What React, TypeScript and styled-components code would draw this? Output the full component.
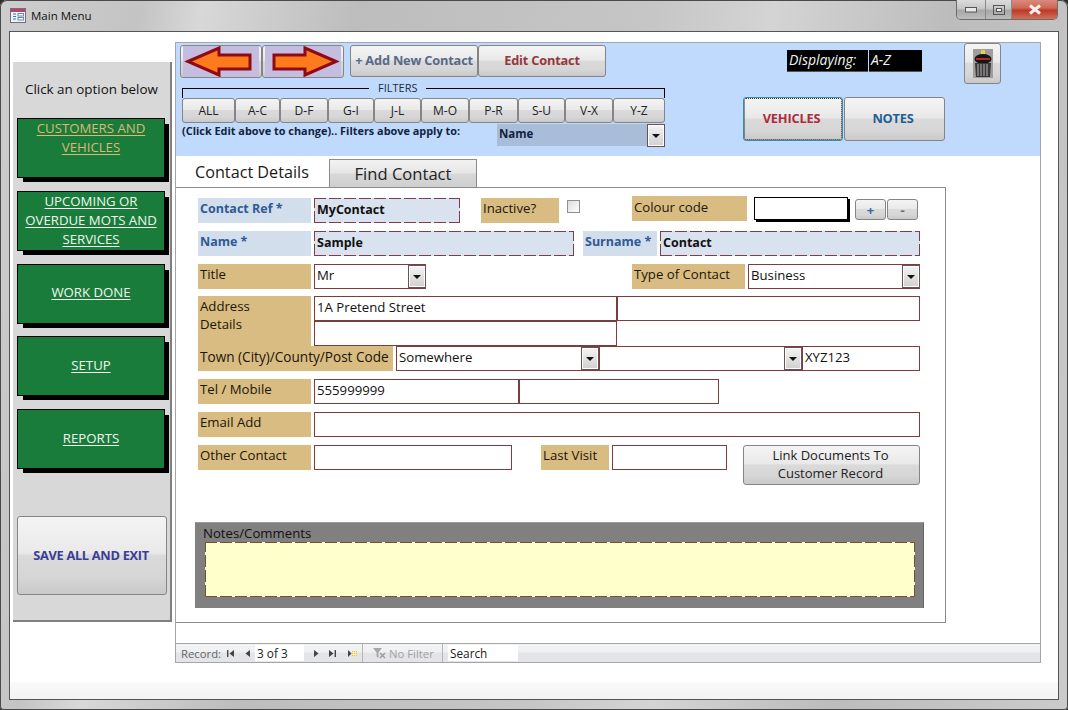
import React from "react";
import styled, { createGlobalStyle, css } from "styled-components";

const Global = createGlobalStyle`
  html, body { margin: 0; padding: 0; background: #2c2c2c; }
  * { box-sizing: border-box; }
  body { font-family: "Open Sans", "Noto Sans", sans-serif; color: #111; }
`;

const gloss = css`
  background: linear-gradient(#f4f4f4 0%, #e9e9e9 47%, #dadada 50%, #d6d6d6 78%, #c9c9c9 100%);
  border: 1px solid #858585;
  border-radius: 3px;
`;

const dashFrame = (c: string) => css`
  background-image:
    repeating-linear-gradient(90deg, ${c} 0 12px, transparent 12px 15px),
    repeating-linear-gradient(90deg, ${c} 0 12px, transparent 12px 15px),
    repeating-linear-gradient(0deg, ${c} 0 12px, transparent 12px 15px),
    repeating-linear-gradient(0deg, ${c} 0 12px, transparent 12px 15px);
  background-size: 100% 1px, 100% 1px, 1px 100%, 1px 100%;
  background-position: top, bottom, left, right;
  background-repeat: no-repeat;
`;

const Window = styled.div`
  width: 1068px;
  height: 710px;
  padding: 0 9px 10px;
  display: flex;
  flex-direction: column;
  overflow: hidden;
  border-radius: 7px 7px 4px 4px;
  box-shadow: inset 0 0 0 1px #4a4a4a;
  background: linear-gradient(100deg, #cdcdcd 0%, #c4c4c4 12%, #d8d8d8 17%, #bdbdbd 30%, #c6c6c6 55%, #d4d4d4 65%, #bcbcbc 80%, #cbcbcb 100%);
`;
const TitleBar = styled.div`
  height: 31px;
  flex: none;
  display: flex;
  align-items: flex-start;
`;
const TitleIcon = styled.svg`
  width: 16px;
  height: 15px;
  margin: 8px 0 0 1px;
`;
const TitleText = styled.span`
  margin: 8px 0 0 5px;
  font-size: 11.5px;
  line-height: 16px;
  color: #111;
`;
const Controls = styled.div`
  margin: 0 1px 0 auto;
  height: 20px;
  display: flex;
  border: 1px solid #6b6b6b;
  border-top: 0;
  border-radius: 0 0 5px 5px;
  overflow: hidden;
`;
const Control = styled.div<{ $w: number; $red?: boolean }>`
  width: ${(p) => p.$w}px;
  display: flex;
  align-items: center;
  justify-content: center;
  border-left: 1px solid #8a8a8a;
  background: ${(p) =>
    p.$red
      ? "linear-gradient(#d98a7c 0%, #cf6a58 40%, #bd3a26 55%, #d2705c 100%)"
      : "linear-gradient(#dcdcdc 0%, #c6c6c6 45%, #a8a8a8 55%, #bcbcbc 100%)"};
  &:first-child { border-left: 0; }
`;
const Client = styled.div`
  flex: 1;
  display: flex;
  flex-direction: column;
  background: #fff;
  border: 1px solid #555;
  min-height: 0;
`;
const Body = styled.div`
  flex: 1;
  display: flex;
  align-items: flex-start;
  padding-left: 3px;
`;
const BottomStrip = styled.div`
  flex: none;
  height: 17px;
  background: linear-gradient(#fafafa, #f3f3f3);
`;

const Sidebar = styled.div`
  width: 159px;
  height: 560px;
  margin-top: 30px;
  padding: 0 0 0 4px;
  background: #d8d8d8;
  border-right: 2px solid #7f7f7f;
  border-bottom: 2px solid #7f7f7f;
  display: flex;
  flex-direction: column;
`;
const SideTitle = styled.div`
  height: 56px;
  padding: 17px 0 0 8px;
  font-size: 13.4px;
  line-height: 20px;
  white-space: nowrap;
  color: #111;
`;
const SideList = styled.div`
  display: flex;
  flex-direction: column;
  gap: 12.75px;
`;
const SideButton = styled.div<{ $tan?: boolean; $top?: boolean }>`
  width: 148px;
  height: 60px;
  padding-bottom: ${(p) => (p.$top ? 0 : 2)}px;
  background: #1a7c3b;
  border: 1px solid #000;
  box-shadow: 5px 5px 0 -1px #000;
  display: flex;
  align-items: ${(p) => (p.$top ? "flex-start" : "center")};
  justify-content: center;
  text-align: center;
  font-size: 13.2px;
  line-height: 19px;
  white-space: nowrap;
  text-decoration: underline;
  text-underline-offset: 2px;
  color: ${(p) => (p.$tan ? "#dcb877" : "#f2f7f0")};
`;
const SaveButton = styled.div`
  ${gloss}
  width: 150px;
  height: 79px;
  margin-top: 47px;
  padding: 0 2px 2px 0;
  display: flex;
  align-items: center;
  justify-content: center;
  font-size: 12.8px;
  font-weight: 700;
  letter-spacing: -0.3px;
  color: #3a3d98;
`;

const Main = styled.div`
  width: 866px;
  height: 621px;
  margin: 10px 0 0 3px;
  border: 1px solid #a6a6a6;
  border-bottom: 0;
  display: flex;
  flex-direction: column;
`;
const Header = styled.div`
  flex: none;
  height: 113px;
  background: #bfdafc;
  display: flex;
`;
const HeadLeft = styled.div`
  width: 494px;
  padding: 2px 0 0 4px;
`;
const TopButtons = styled.div`
  display: flex;
  align-items: flex-start;
`;
const NavButton = styled.div`
  ${gloss}
  width: 82px;
  height: 33px;
  display: flex;
  align-items: center;
  justify-content: center;
  padding: 0 2px;
`;
const ActionButton = styled.div<{ $color: string; $ml?: number }>`
  ${gloss}
  width: 128px;
  height: 32px;
  margin-left: ${(p) => p.$ml || 0}px;
  padding-bottom: 2px;
  display: flex;
  align-items: center;
  justify-content: center;
  font-size: 12.8px;
  font-weight: 700;
  letter-spacing: -0.2px;
  white-space: nowrap;
  color: ${(p) => p.$color};
`;
const FilterFrame = styled.div`
  width: 483px;
  height: 10px;
  margin: 10px 0 0 2px;
  display: flex;
  border: 1px solid #000;
  border-bottom: 0;
  border-top: 0;
`;
const FilterLine = styled.div<{ $w?: number }>`
  height: 1px;
  background: #000;
  flex: ${(p) => (p.$w ? `0 0 ${p.$w}px` : "1")};
`;
const FilterLegend = styled.div`
  padding: 0 9px;
  margin-top: -7px;
  font-size: 11px;
  line-height: 14px;
  color: #1c2b44;
`;
const FilterRow = styled.div`
  display: flex;
  margin-left: 2px;
`;
const FilterButton = styled.div<{ $w: number }>`
  ${gloss}
  width: ${(p) => p.$w}px;
  height: 25px;
  padding-bottom: 1px;
  display: flex;
  align-items: center;
  justify-content: center;
  font-size: 12px;
  color: #222;
`;
const CaptionRow = styled.div`
  display: flex;
  align-items: flex-start;
  margin: 1px 0 0 2px;
`;
const Caption = styled.div`
  width: 315px;
  font-size: 10.9px;
  font-weight: 700;
  line-height: 14px;
  color: #12233d;
`;
const ScopeSelect = styled.div`
  width: 168px;
  height: 22px;
  background: #a9bdd9;
  display: flex;
  align-items: center;
  justify-content: space-between;
  padding: 0 1px 0 2px;
  font-size: 11.5px;
  font-weight: 700;
  color: #12233d;
`;
const ScopeText = styled.span`
  margin-top: -4px;
`;
const HeadRight = styled.div`
  flex: 1;
`;
const RightTop = styled.div`
  height: 54px;
  padding-left: 117px;
  display: flex;
  align-items: flex-start;
`;
const DisplayLabel = styled.div<{ $w: number; $ml?: number }>`
  width: ${(p) => p.$w}px;
  height: 22px;
  margin: 7px 0 0 ${(p) => p.$ml || 0}px;
  padding-left: 2px;
  background: #000;
  color: #f2f2f2;
  font-size: 14px;
  font-style: italic;
  line-height: 19px;
  white-space: nowrap;
  border-bottom: 1px solid #555;
`;
const TrashButton = styled.div`
  ${gloss}
  width: 37px;
  height: 41px;
  margin-left: 42px;
  display: flex;
  align-items: center;
  justify-content: center;
`;
const RightButtons = styled.div`
  display: flex;
  gap: 1px;
  padding-left: 73px;
`;
const BigButton = styled.div<{ $color: string; $w: number; $focus?: boolean }>`
  ${gloss}
  width: ${(p) => p.$w}px;
  height: 44px;
  padding: 0 3px 2px 0;
  display: flex;
  align-items: center;
  justify-content: center;
  font-size: 12.8px;
  font-weight: 700;
  letter-spacing: -0.2px;
  color: ${(p) => p.$color};
  ${(p) =>
    p.$focus &&
    css`
      border-color: #3f8aa8;
      outline: 1px dotted #333;
      outline-offset: -2px;
    `}
`;

const TabStrip = styled.div`
  flex: none;
  height: 31px;
  padding-left: 19px;
  display: flex;
  align-items: flex-end;
`;
const ActiveTab = styled.div`
  width: 134px;
  height: 31px;
  padding-top: 4px;
  font-size: 16.2px;
  line-height: 24px;
  white-space: nowrap;
  color: #1a1a1a;
`;
const Tab = styled.div`
  width: 148px;
  height: 28px;
  display: flex;
  align-items: center;
  justify-content: center;
  font-size: 16.6px;
  color: #222;
  border: 1px solid #8c8c8c;
  border-bottom: 0;
  background: linear-gradient(#f2f2f2 0%, #e6e6e6 48%, #d8d8d8 52%, #cfcfcf 100%);
`;
const Panel = styled.div`
  width: 770px;
  height: 436px;
  padding: 10px 0 0 22px;
  border-top: 1px solid #8c8c8c;
  border-right: 1px solid #8c8c8c;
  border-bottom: 1px solid #8c8c8c;
`;
const Row = styled.div<{ $mb?: number; $h?: number }>`
  display: flex;
  align-items: flex-start;
  height: ${(p) => p.$h ?? 25}px;
  margin-bottom: ${(p) => p.$mb ?? 8}px;
`;
const Label = styled.div<{ $w?: number; $ml?: number; $mt?: number; $blue?: boolean; $h?: number; $fs?: number; $pt?: number }>`
  flex: none;
  width: ${(p) => p.$w ?? 113}px;
  height: ${(p) => p.$h ?? 25}px;
  margin: ${(p) => p.$mt ?? 0}px 0 0 ${(p) => p.$ml ?? 0}px;
  padding: ${(p) => p.$pt ?? (p.$blue ? 2 : 1)}px 2px 0;
  font-size: ${(p) => p.$fs ?? (p.$blue ? 12.5 : 13.2)}px;
  line-height: 18px;
  white-space: nowrap;
  background: ${(p) => (p.$blue ? "#d3deec" : "#d9bc82")};
  color: ${(p) => (p.$blue ? "#2d5a96" : "#1c1608")};
  font-weight: ${(p) => (p.$blue ? 700 : 400)};
`;
const Field = styled.div<{ $w: number; $ml?: number }>`
  flex: none;
  width: ${(p) => p.$w}px;
  height: 25px;
  margin-left: ${(p) => p.$ml ?? 0}px;
  padding-left: 2px;
  border: 1px solid #7d3d3d;
  background: #fff;
  font-size: 13.2px;
  line-height: 21px;
  white-space: nowrap;
  color: #111;
`;
const DashField = styled.div<{ $w: number; $ml?: number }>`
  flex: none;
  width: ${(p) => p.$w}px;
  height: 25px;
  margin-left: ${(p) => p.$ml ?? 0}px;
  padding-left: 3px;
  background-color: #d9e2ef;
  ${dashFrame("#7d3d4d")}
  font-size: 12.5px;
  font-weight: 700;
  line-height: 23px;
  color: #111;
`;
const SelectBox = styled(Field)`
  display: flex;
  justify-content: space-between;
`;
const Arrow = styled.div`
  width: 16px;
  height: 21px;
  margin: 1px 0 0 auto;
  flex: none;
  position: relative;
  border: 1px solid #fff;
  box-shadow: 0 0 0 1px #6f5050;
  background: linear-gradient(#f2f2f2, #d2d2d2);
  &::after {
    content: "";
    position: absolute;
    left: 3px;
    top: 8px;
    border: 4px solid transparent;
    border-top: 4px solid #111;
    border-bottom: 0;
  }
`;
const Check = styled.div`
  flex: none;
  width: 13px;
  height: 13px;
  margin: 2px 0 0 8px;
  border: 1px solid #8f8f8f;
  background: linear-gradient(135deg, #dcdcdc, #fff);
`;
const ColourBox = styled.div`
  flex: none;
  width: 94px;
  height: 23px;
  margin: -1px 0 0 7px;
  background: #fff;
  border: 1px solid #000;
  box-shadow: 2px 2px 0 #000;
`;
const MiniButton = styled.div<{ $ml: number; $color: string }>`
  ${gloss}
  flex: none;
  width: 31px;
  height: 21px;
  margin: 1px 0 0 ${(p) => p.$ml}px;
  text-align: center;
  font-size: 13px;
  line-height: 21px;
  font-weight: 700;
  color: ${(p) => p.$color};
`;
const AddressLines = styled.div`
  margin-left: 3px;
  display: flex;
  flex-direction: column;
`;
const AddressLine = styled.div`
  display: flex;
`;
const LinkButton = styled.div`
  ${gloss}
  flex: none;
  width: 177px;
  height: 40px;
  margin-left: 16px;
  padding-right: 2px;
  text-align: center;
  font-size: 13px;
  line-height: 18px;
  color: #222;
`;
const Notes = styled.div`
  width: 729px;
  height: 86px;
  margin: 52px 0 0 -3px;
  padding: 0 8px 0 10px;
  background: #808080;
  border-top: 1px solid #9a9a9a;
  border-right: 1px solid #666;
`;
const NotesLabel = styled.div`
  height: 19px;
  margin-left: -2px;
  padding-top: 1px;
  font-size: 13.2px;
  line-height: 18px;
  color: #111;
`;
const NotesBox = styled.div`
  height: 55px;
  background-color: #ffffcc;
  outline: 1px solid #fff;
  outline-offset: -1px;
  position: relative;
  &::after {
    content: "";
    position: absolute;
    inset: 0;
    ${dashFrame("#7a5030")}
  }
`;

const StatusBar = styled.div`
  flex: none;
  margin-top: auto;
  height: 20px;
  display: flex;
  align-items: center;
  border-top: 1px solid #a6a6a6;
  border-bottom: 1px solid #a6a6a6;
  background: linear-gradient(#f3f4f6 0%, #eff0f2 45%, #e3e4e7 50%, #e4e5e8 100%);
  font-size: 11.3px;
  color: #6a6a6a;
`;
const StatusText = styled.span<{ $w: number; $pl: number; $faint?: boolean }>`
  flex: none;
  width: ${(p) => p.$w}px;
  padding-left: ${(p) => p.$pl}px;
  white-space: nowrap;
  color: ${(p) => (p.$faint ? "#a2a2a2" : "#666")};
`;
const StatusIcon = styled.svg<{ $ml: number }>`
  flex: none;
  width: 9px;
  height: 9px;
  margin-left: ${(p) => p.$ml}px;
`;
const StatusBox = styled.div<{ $w: number; $ml: number }>`
  flex: none;
  width: ${(p) => p.$w}px;
  height: 16px;
  margin-left: ${(p) => p.$ml}px;
  padding-left: 2px;
  background: #fff;
  color: #222;
  font-size: 11.8px;
  line-height: 16px;
`;
const StatusDivider = styled.div<{ $ml: number }>`
  flex: none;
  width: 1px;
  height: 18px;
  margin-left: ${(p) => p.$ml}px;
  background: #b5b5b5;
`;
const FilterIcon = styled.svg`
  flex: none;
  width: 14px;
  height: 14px;
  margin-left: 9px;
`;

const filters: [string, number][] = [
  ["ALL", 53], ["A-C", 45], ["D-F", 48], ["G-I", 46], ["J-L", 47],
  ["M-O", 48], ["P-R", 49], ["S-U", 47], ["V-X", 48], ["Y-Z", 52],
];

const LeftArrow = () => (
  <svg width="76" height="31" viewBox="0 0 76 31">
    <rect width="76" height="31" fill="#c5bde0" />
    <path d="M5 15.5 L36 2 V9 H67 V23 H36 V29 Z" fill="#ff7a1c" stroke="#8e0a14" strokeWidth="3" />
  </svg>
);
const RightArrow = () => (
  <svg width="76" height="31" viewBox="0 0 76 31">
    <rect width="76" height="31" fill="#c5bde0" />
    <path d="M71 15.5 L40 2 V9 H9 V23 H40 V29 Z" fill="#ff7a1c" stroke="#8e0a14" strokeWidth="3" />
  </svg>
);
const TrashIcon = () => (
  <svg width="20" height="29" viewBox="0 0 20 29">
    <rect width="20" height="29" fill="#a39c9c" />
    <path d="M8 1h4v5H8z" fill="#d8d84a" />
    <ellipse cx="10" cy="10" rx="8.5" ry="5" fill="#161616" />
    <path d="M3 9h14v2H3z" fill="#b3262a" />
    <path d="M2 14h16l-1 14H3z" fill="#3a3a3a" />
    <path d="M5 15v12M8 15v12M11 15v12M14 15v12" stroke="#b5b5b5" strokeWidth="1" />
  </svg>
);

const App = () => (
  <Window>
    <Global />
    <TitleBar>
      <TitleIcon viewBox="0 0 16 15">
        <rect x="0.5" y="0.5" width="15" height="14" fill="#eef3fa" stroke="#7a6a80" />
        <rect x="1" y="1" width="14" height="3" fill="#b0486a" />
        <path d="M3 6h3M3 8.5h3M3 11h3" stroke="#4a6ea8" />
        <rect x="8" y="5.5" width="5.5" height="2.5" fill="#fff" stroke="#4a6ea8" strokeWidth="0.8" />
        <rect x="8" y="9.5" width="5.5" height="2.5" fill="#fff" stroke="#4a6ea8" strokeWidth="0.8" />
      </TitleIcon>
      <TitleText>Main Menu</TitleText>
      <Controls>
        <Control $w={28}>
          <svg width="12" height="6" viewBox="0 0 12 6"><rect x="0.5" y="0.5" width="11" height="4.5" fill="#e8e8e8" stroke="#555" /></svg>
        </Control>
        <Control $w={26}>
          <svg width="12" height="10" viewBox="0 0 12 10"><rect x="0.5" y="0.5" width="11" height="9" fill="none" stroke="#555" /><rect x="3.5" y="3.5" width="5" height="3" fill="#eee" stroke="#555" /></svg>
        </Control>
        <Control $w={46} $red>
          <svg width="14" height="11" viewBox="0 0 14 11"><path d="M2 1.5 L12 9.5 M12 1.5 L2 9.5" stroke="#f4f0ee" strokeWidth="3" /></svg>
        </Control>
      </Controls>
    </TitleBar>
    <Client>
      <Body>
        <Sidebar>
          <SideTitle>Click an option below</SideTitle>
          <SideList>
            <SideButton $tan $top>CUSTOMERS AND<br />VEHICLES</SideButton>
            <SideButton $top>UPCOMING OR<br />OVERDUE MOTS AND<br />SERVICES</SideButton>
            <SideButton>WORK DONE</SideButton>
            <SideButton>SETUP</SideButton>
            <SideButton>REPORTS</SideButton>
          </SideList>
          <SaveButton>SAVE ALL AND EXIT</SaveButton>
        </Sidebar>
        <Main>
          <Header>
            <HeadLeft>
              <TopButtons>
                <NavButton><LeftArrow /></NavButton>
                <NavButton><RightArrow /></NavButton>
                <ActionButton $ml={6} $color="#566a88">+ Add New Contact</ActionButton>
                <ActionButton $color="#95383c">Edit Contact</ActionButton>
              </TopButtons>
              <FilterFrame>
                <FilterLine $w={186} />
                <FilterLegend>FILTERS</FilterLegend>
                <FilterLine />
              </FilterFrame>
              <FilterRow>
                {filters.map(([t, w]) => (
                  <FilterButton key={t} $w={w}>{t}</FilterButton>
                ))}
              </FilterRow>
              <CaptionRow>
                <Caption>(Click Edit above to change).. Filters above apply to:</Caption>
                <ScopeSelect><ScopeText>Name</ScopeText><Arrow /></ScopeSelect>
              </CaptionRow>
            </HeadLeft>
            <HeadRight>
              <RightTop>
                <DisplayLabel $w={81}>Displaying:</DisplayLabel>
                <DisplayLabel $w={53} $ml={1}>A-Z</DisplayLabel>
                <TrashButton><TrashIcon /></TrashButton>
              </RightTop>
              <RightButtons>
                <BigButton $w={100} $color="#b02a3c" $focus>VEHICLES</BigButton>
                <BigButton $w={101} $color="#1f5f96">NOTES</BigButton>
              </RightButtons>
            </HeadRight>
          </Header>
          <TabStrip>
            <ActiveTab>Contact Details</ActiveTab>
            <Tab>Find Contact</Tab>
          </TabStrip>
          <Panel>
            <Row>
              <Label $blue>Contact Ref *</Label>
              <DashField $w={146} $ml={3}>MyContact</DashField>
              <Label $w={78} $ml={21}>Inactive?</Label>
              <Check />
              <Label $w={115} $ml={52} $mt={-2} $pt={2}>Colour code</Label>
              <ColourBox />
              <MiniButton $ml={7} $color="#2a6aa8">+</MiniButton>
              <MiniButton $ml={1} $color="#666">-</MiniButton>
            </Row>
            <Row>
              <Label $blue>Name *</Label>
              <DashField $w={260} $ml={3}>Sample</DashField>
              <Label $blue $w={74} $ml={9}>Surname *</Label>
              <DashField $w={260} $ml={3}>Contact</DashField>
            </Row>
            <Row $mb={7}>
              <Label>Title</Label>
              <SelectBox $w={112} $ml={3}>Mr<Arrow /></SelectBox>
              <Label $w={113} $ml={206}>Type of Contact</Label>
              <SelectBox $w={172} $ml={3}>Business<Arrow /></SelectBox>
            </Row>
            <Row $h={50} $mb={0}>
              <Label $h={50}>Address<br />Details</Label>
              <AddressLines>
                <AddressLine>
                  <Field $w={303}>1A Pretend Street</Field>
                  <Field $w={303}></Field>
                </AddressLine>
                <AddressLine>
                  <Field $w={303}></Field>
                </AddressLine>
              </AddressLines>
            </Row>
            <Row>
              <Label $w={195} $fs={13.6} $pt={2}>Town (City)/County/Post Code</Label>
              <SelectBox $w={203} $ml={3}>Somewhere<Arrow /></SelectBox>
              <SelectBox $w={203}><Arrow /></SelectBox>
              <Field $w={118}>XYZ123</Field>
            </Row>
            <Row>
              <Label>Tel / Mobile</Label>
              <Field $w={205} $ml={3}>555999999</Field>
              <Field $w={200}></Field>
            </Row>
            <Row>
              <Label>Email Add</Label>
              <Field $w={606} $ml={3}></Field>
            </Row>
            <Row>
              <Label>Other Contact</Label>
              <Field $w={198} $ml={3}></Field>
              <Label $w={68} $ml={29}>Last Visit</Label>
              <Field $w={115} $ml={3}></Field>
              <LinkButton>Link Documents To<br />Customer Record</LinkButton>
            </Row>
            <Notes>
              <NotesLabel>Notes/Comments</NotesLabel>
              <NotesBox />
            </Notes>
          </Panel>
          <StatusBar>
            <StatusText $w={50} $pl={5}>Record:</StatusText>
            <StatusIcon $ml={0} viewBox="0 0 9 9"><path d="M1 1h1.4v7H1zM8 1v7L3.5 4.5z" fill="#444" /></StatusIcon>
            <StatusIcon $ml={8} viewBox="0 0 9 9"><path d="M7 1v7L2.5 4.5z" fill="#444" /></StatusIcon>
            <StatusBox $w={49} $ml={3}>3 of 3</StatusBox>
            <StatusIcon $ml={8} viewBox="0 0 9 9"><path d="M2 1v7L6.5 4.5z" fill="#444" /></StatusIcon>
            <StatusIcon $ml={7} viewBox="0 0 9 9"><path d="M1 1v7L5.5 4.5zM6.6 1H8v7H6.6z" fill="#444" /></StatusIcon>
            <StatusIcon $ml={11} viewBox="0 0 9 9"><path d="M0 1v7L3.5 4.5z" fill="#444" /><path d="M4 2h5v5H4z" fill="#e8c832" /><path d="M5.5 2v5M7.5 2v5M4 3.5h5M4 5.5h5" stroke="#fff" strokeWidth="0.6" /></StatusIcon>
            <StatusDivider $ml={5} />
            <FilterIcon viewBox="0 0 14 14">
              <path d="M1 2h9L6.5 6.5V12L4.5 10.5v-4z" fill="#a8a8a8" />
              <path d="M8 7l5 5M13 7l-5 5" stroke="#9a9a9a" strokeWidth="1.4" />
            </FilterIcon>
            <StatusText $w={56} $pl={3} $faint>No Filter</StatusText>
            <StatusDivider $ml={0} />
            <StatusBox $w={70} $ml={5}>Search</StatusBox>
          </StatusBar>
        </Main>
      </Body>
      <BottomStrip />
    </Client>
  </Window>
);

export default App;
